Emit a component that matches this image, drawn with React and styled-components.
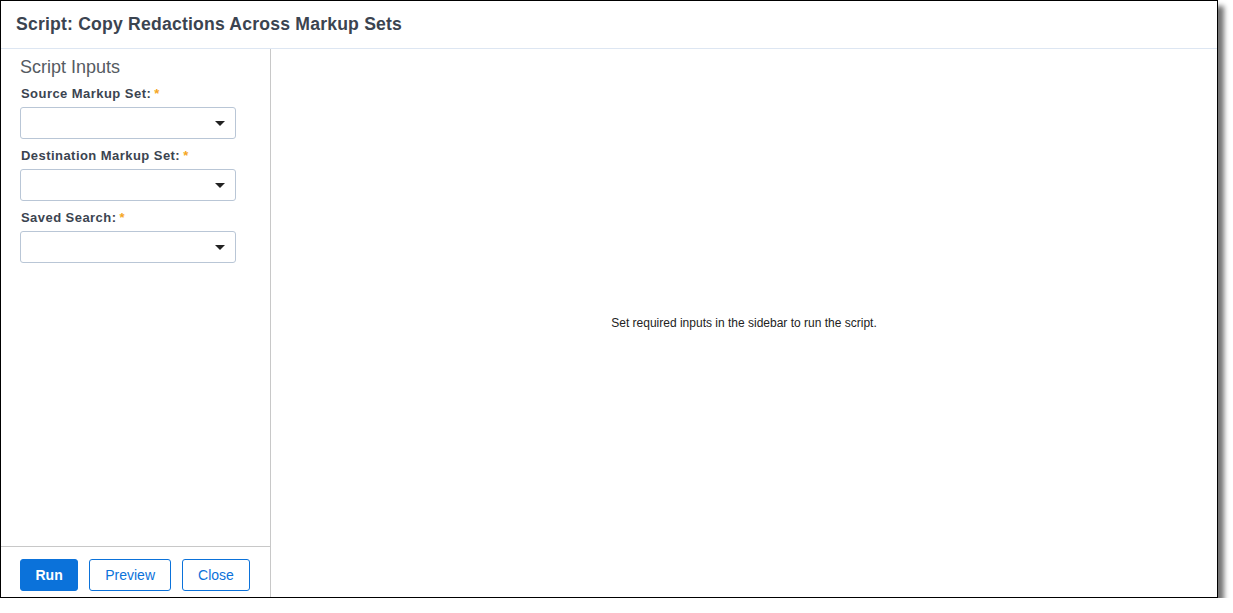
import React from "react";
import styled, { createGlobalStyle } from "styled-components";

const GlobalStyle = createGlobalStyle`
  *, *::before, *::after {
    box-sizing: border-box;
  }
  html, body {
    margin: 0;
    padding: 0;
    background: #fff;
    font-family: "Liberation Sans", Arial, sans-serif;
  }
`;

const Frame = styled.div`
  width: 1218px;
  height: 598px;
  border: 1px solid #000;
  background: #fff;
  display: flex;
  flex-direction: column;
  box-shadow: 6px 6px 5px rgba(0, 0, 0, 0.55);
`;

const Header = styled.header`
  height: 48px;
  flex: none;
  display: flex;
  align-items: center;
  padding-left: 15px;
  border-bottom: 1px solid #dde6f2;
`;

const Title = styled.h1`
  margin: 0;
  font-size: 17.6px;
  font-weight: bold;
  letter-spacing: 0.2px;
  color: #3b4450;
`;

const Body = styled.div`
  flex: 1;
  display: flex;
  min-height: 0;
`;

const Sidebar = styled.aside`
  width: 270px;
  flex: none;
  border-right: 1px solid #c8c8c8;
  display: flex;
  flex-direction: column;
`;

const Inputs = styled.div`
  flex: 1;
  padding: 8px 34px 0 19px;
`;

const SectionTitle = styled.h2`
  margin: 0 0 9px 0;
  font-size: 18px;
  font-weight: normal;
  color: #555b62;
  line-height: 20px;
`;

const Field = styled.div`
  display: flex;
  flex-direction: column;
  margin-bottom: 9px;
`;

const Label = styled.label`
  font-size: 13px;
  font-weight: bold;
  color: #3b4450;
  letter-spacing: 0.45px;
  line-height: 16px;
  margin: 0 0 5px 1px;
`;

const Required = styled.span`
  color: #f5a623;
  margin-left: 3px;
`;

const SelectBox = styled.div`
  height: 32px;
  border: 1px solid #b9c6d6;
  border-radius: 3px;
  background: #fff;
  display: flex;
  align-items: center;
  justify-content: flex-end;
  padding-right: 10px;
`;

const Caret = styled.span`
  width: 0;
  height: 0;
  border-left: 5px solid transparent;
  border-right: 5px solid transparent;
  border-top: 5px solid #222;
`;

const Footer = styled.div`
  height: 51px;
  flex: none;
  border-top: 1px solid #c8c8c8;
  display: flex;
  align-items: flex-start;
  gap: 11px;
  padding: 12px 0 0 19px;
`;

const Button = styled.button`
  height: 32px;
  padding: 0 ${(p) => p.$pad}px;
  border-radius: 3px;
  font-family: "Liberation Sans", Arial, sans-serif;
  font-size: 14px;
  cursor: pointer;
  border: 1px solid #0b72da;
  background: ${(p) => (p.$primary ? "#0b72da" : "#fff")};
  color: ${(p) => (p.$primary ? "#fff" : "#0b72da")};
  font-weight: ${(p) => (p.$primary ? "bold" : "normal")};
`;

const Main = styled.main`
  flex: 1;
  display: flex;
  align-items: center;
  justify-content: center;
`;

const Message = styled.p`
  margin: 0;
  font-size: 12px;
  color: #222;
`;

const fields = ["Source Markup Set:", "Destination Markup Set:", "Saved Search:"];

const App = () => {
  return (
    <>
      <GlobalStyle />
      <Frame>
        <Header>
          <Title>Script: Copy Redactions Across Markup Sets</Title>
        </Header>
        <Body>
          <Sidebar>
            <Inputs>
              <SectionTitle>Script Inputs</SectionTitle>
              {fields.map((f) => (
                <Field key={f}>
                  <Label>
                    {f}
                    <Required>*</Required>
                  </Label>
                  <SelectBox>
                    <Caret />
                  </SelectBox>
                </Field>
              ))}
            </Inputs>
            <Footer>
              <Button $primary $pad={14.5}>Run</Button>
              <Button $pad={15}>Preview</Button>
              <Button $pad={15}>Close</Button>
            </Footer>
          </Sidebar>
          <Main>
            <Message>Set required inputs in the sidebar to run the script.</Message>
          </Main>
        </Body>
      </Frame>
    </>
  );
};

export default App;
